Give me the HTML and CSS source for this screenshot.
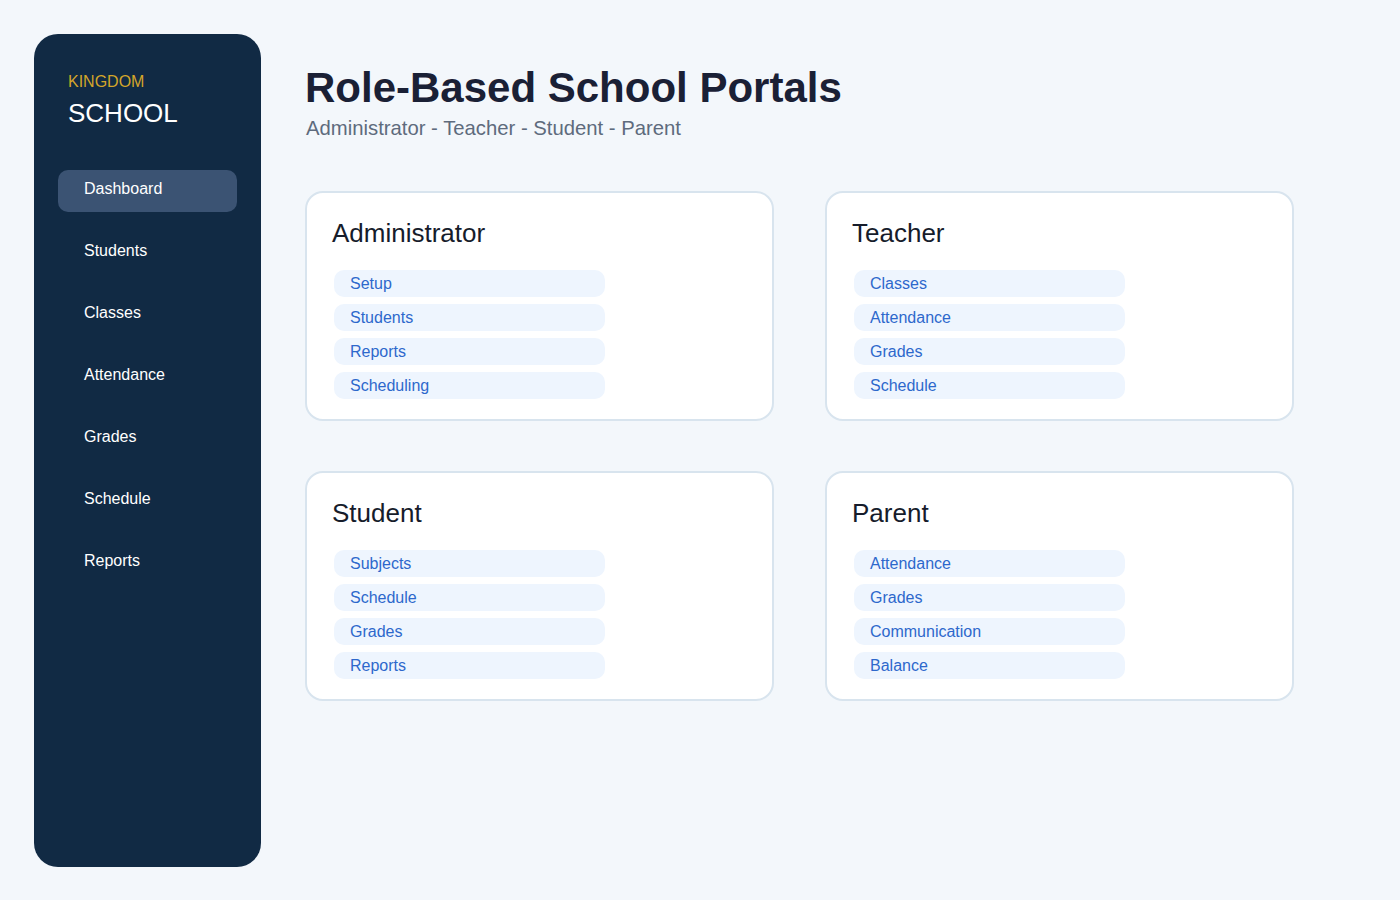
FILE: index.html
```html
<!DOCTYPE html>
<html>
<head>
<meta charset="utf-8">
<title>Kingdom School</title>
<link rel="stylesheet" href="styles.css">
</head>
<body>
<div class="app">
  <aside class="sidebar">
    <div class="brand">
      <div class="brand-top">KINGDOM</div>
      <div class="brand-name">SCHOOL</div>
    </div>
    <nav class="nav">
      <a class="nav-item active">Dashboard</a>
      <a class="nav-item">Students</a>
      <a class="nav-item">Classes</a>
      <a class="nav-item">Attendance</a>
      <a class="nav-item">Grades</a>
      <a class="nav-item">Schedule</a>
      <a class="nav-item">Reports</a>
    </nav>
  </aside>
  <main class="main">
    <h1 class="title">Role-Based School Portals</h1>
    <p class="subtitle">Administrator - Teacher - Student - Parent</p>
    <div class="grid">
      <section class="card">
        <h2 class="card-title">Administrator</h2>
        <ul class="links">
          <li class="pill">Setup</li>
          <li class="pill">Students</li>
          <li class="pill">Reports</li>
          <li class="pill">Scheduling</li>
        </ul>
      </section>
      <section class="card">
        <h2 class="card-title">Teacher</h2>
        <ul class="links">
          <li class="pill">Classes</li>
          <li class="pill">Attendance</li>
          <li class="pill">Grades</li>
          <li class="pill">Schedule</li>
        </ul>
      </section>
      <section class="card">
        <h2 class="card-title">Student</h2>
        <ul class="links">
          <li class="pill">Subjects</li>
          <li class="pill">Schedule</li>
          <li class="pill">Grades</li>
          <li class="pill">Reports</li>
        </ul>
      </section>
      <section class="card">
        <h2 class="card-title">Parent</h2>
        <ul class="links">
          <li class="pill">Attendance</li>
          <li class="pill">Grades</li>
          <li class="pill">Communication</li>
          <li class="pill">Balance</li>
        </ul>
      </section>
    </div>
  </main>
</div>
</body>
</html>
```
FILE: styles.css
```css
* { box-sizing: border-box; }
html, body { margin: 0; padding: 0; }
body {
  background: #f3f7fb;
  font-family: "Liberation Sans", Arial, sans-serif;
  width: 1400px;
  height: 900px;
  overflow: hidden;
}
.app {
  display: flex;
  padding: 34px;
  gap: 44px;
  height: 900px;
}
.sidebar {
  width: 227px;
  height: 833px;
  flex-shrink: 0;
  background: #112a44;
  border-radius: 24px;
  padding: 38px 24px;
}
.brand {
  padding-left: 10px;
}
.brand-top {
  color: #d4a52a;
  font-size: 16px;
  line-height: 20px;
}
.brand-name {
  color: #ffffff;
  font-size: 26px;
  line-height: 30px;
  margin-top: 6px;
}
.nav {
  display: flex;
  flex-direction: column;
  gap: 20px;
  margin-top: 42px;
}
.nav-item {
  display: block;
  height: 42px;
  line-height: 38px;
  padding-left: 26px;
  color: #ffffff;
  font-size: 16px;
  border-radius: 10px;
}
.nav-item.active {
  background: #3b5373;
}
.main {
  flex: 1;
  padding-top: 30px;
}
.title {
  margin: 0;
  font-size: 42px;
  line-height: 48px;
  font-weight: 700;
  color: #1a2035;
}
.subtitle {
  margin: 4px 0 0 1px;
  font-size: 20.3px;
  line-height: 24px;
  color: #5e6b7d;
}
.grid {
  display: grid;
  grid-template-columns: 469px 469px;
  grid-auto-rows: 230px;
  column-gap: 51px;
  row-gap: 50px;
  margin-top: 51px;
}
.card {
  background: #ffffff;
  border: 2px solid #d8e4ee;
  border-radius: 18px;
  padding: 24px 25px 20px;
}
.card-title {
  margin: 0;
  font-size: 26px;
  line-height: 32px;
  font-weight: 400;
  color: #161c2b;
}
.links {
  list-style: none;
  margin: 21px 0 0 2px;
  padding: 0;
  display: flex;
  flex-direction: column;
  gap: 7px;
}
.pill {
  width: 271px;
  height: 27px;
  line-height: 27px;
  padding-left: 16px;
  background: #eef5fe;
  border-radius: 10px;
  color: #2d68cc;
  font-size: 16px;
}
```
